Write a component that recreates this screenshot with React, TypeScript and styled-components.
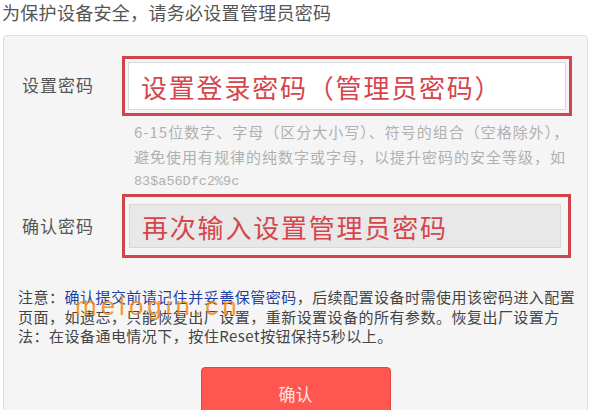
import React from "react";
import styled, { createGlobalStyle } from "styled-components";

const Global = createGlobalStyle`
  html, body { margin: 0; padding: 0; background: #ffffff; }
  body {
    font-family: "Noto Sans CJK SC", "Noto Sans", "Liberation Sans", sans-serif;
    overflow: hidden;
  }
`;

const Page = styled.div`
  width: 592px;
  height: 410px;
  overflow: hidden;
`;

const Heading = styled.div`
  font-size: 18px;
  line-height: 24px;
  color: #555;
  padding-left: 2px;
  letter-spacing: 0.3px;
`;

const Panel = styled.div`
  margin: 11px 0 0 3px;
  width: 585px;
  height: 400px;
  box-sizing: border-box;
  background: #f5f5f5;
  border: 1px solid #dedede;
  border-radius: 4px;
  padding: 20px 0 0 18px;
  display: flex;
  flex-direction: column;
`;

const Row = styled.div`
  display: flex;
  align-items: flex-start;
`;

const Label = styled.div<{ $top: number }>`
  width: 100px;
  flex: none;
  font-size: 17px;
  letter-spacing: 1px;
  color: #555;
  line-height: 24px;
  padding-top: ${(p) => p.$top}px;
`;

const Field = styled.div`
  display: flex;
  flex-direction: column;
`;

const Outline = styled.div<{ $w: number; $pad: string }>`
  width: ${(p) => p.$w}px;
  box-sizing: border-box;
  border: 3px solid #d0454c;
  padding: ${(p) => p.$pad};
`;

const Input = styled.div<{ $bg: string; $h: number }>`
  height: ${(p) => p.$h}px;
  box-sizing: border-box;
  background: ${(p) => p.$bg};
  border: 1px solid #d8d8d8;
  display: flex;
  align-items: center;
  padding-left: 12px;
  font-size: 26px;
  letter-spacing: 1.8px;
  color: #d6454c;
  white-space: nowrap;
`;

const Hint = styled.div`
  margin: 3px 0 0 12px;
  font-size: 15px;
  line-height: 25px;
  color: #b0b0b0;
  letter-spacing: 1px;
  white-space: nowrap;
`;

const Mono = styled.div`
  font-family: "Liberation Mono", "DejaVu Sans Mono", monospace;
  font-size: 13.5px;
  line-height: 25px;
  letter-spacing: 0;
  color: #b0b0b0;
`;

const Note = styled.div`
  position: relative;
  margin: 29px 0 0 -4px;
  font-size: 15px;
  line-height: 19.5px;
  letter-spacing: 0.48px;
  color: #444;
  white-space: nowrap;
`;

const Blue = styled.span`
  color: #1f3fa3;
`;

const Watermark = styled.span`
  position: absolute;
  z-index: 2;
  left: 57px;
  top: 6px;
  font-family: "Liberation Sans", sans-serif;
  font-size: 26px;
  line-height: 26px;
  letter-spacing: 4px;
  color: rgba(242, 138, 18, 0.85);
  pointer-events: none;
`;

const ButtonWrap = styled.div`
  display: flex;
  justify-content: center;
  margin: 21px 0 0 -18px;
`;

const Button = styled.div`
  width: 190px;
  height: 50px;
  box-sizing: border-box;
  background: #ff5650;
  border: 1px solid #e2453f;
  border-radius: 4px;
  color: #fde4e2;
  font-size: 17px;
  display: flex;
  align-items: flex-start;
  justify-content: center;
  padding-top: 13px;
`;

export default function App() {
  return (
    <Page>
      <Global />
      <Heading>为保护设备安全，请务必设置管理员密码</Heading>
      <Panel>
        <Row>
          <Label $top={17}>设置密码</Label>
          <Field>
            <Outline $w={450} $pad="3px">
              <Input $bg="#ffffff" $h={48}>设置登录密码（管理员密码）</Input>
            </Outline>
            <Hint>
              6-15位数字、字母（区分大小写）、符号的组合（空格除外），
              <br />
              避免使用有规律的纯数字或字母，以提升密码的安全等级，如
              <Mono>83$a56Dfc2%9c</Mono>
            </Hint>
          </Field>
        </Row>
        <Row>
          <Label $top={20}>确认密码</Label>
          <Field>
            <Outline $w={449} $pad="7px 7px 7px 4px">
              <Input $bg="#e8e8e8" $h={44}>再次输入设置管理员密码</Input>
            </Outline>
          </Field>
        </Row>
        <Note>
          注意：<Blue>确认提交前请记住并妥善保管密码</Blue>，后续配置设备时需使用该密码进入配置
          <br />
          页面，如遗忘，只能恢复出厂设置，重新设置设备的所有参数。恢复出厂设置方
          <br />
          法：在设备通电情况下，按住Reset按钮保持5秒以上。
          <Watermark>melogin.cn</Watermark>
        </Note>
        <ButtonWrap>
          <Button>确认</Button>
        </ButtonWrap>
      </Panel>
    </Page>
  );
}
